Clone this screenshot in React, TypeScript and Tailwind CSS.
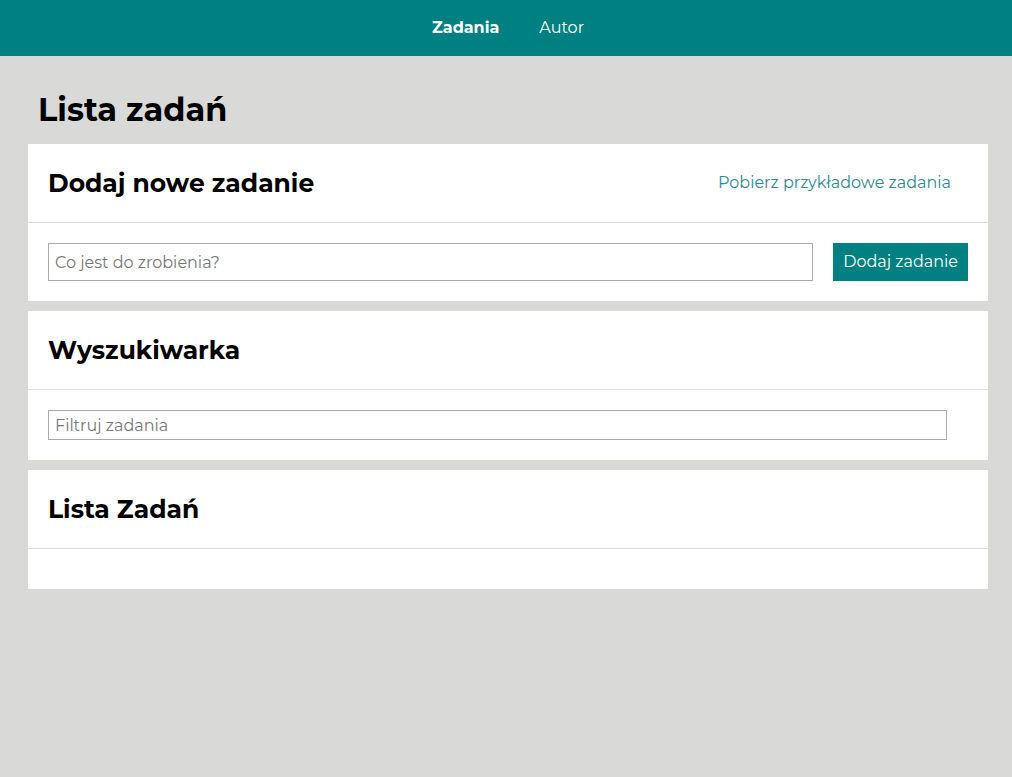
export default function App() {
  const font = { fontFamily: '"Montserrat", "Open Sans", "Noto Sans", sans-serif' };
  return (
    <div className="min-h-[777px] bg-[#d9d9d8] text-black" style={font}>
      <header className="h-14 bg-[#008080] flex items-center justify-center gap-10 pl-1 text-white text-base">
        <a className="font-bold">Zadania</a>
        <a>Autor</a>
      </header>
      <main className="pl-[28px] pr-[24px] pt-[35px]">
        <h1 className="ml-[10px] mb-[15px] text-[32px] leading-[38px] font-bold">Lista zadań</h1>
        <div className="flex flex-col gap-[10px]">
          <section className="bg-white">
            <div className="flex items-center justify-between pl-5 pr-[37px] py-5 border-b border-[#dddddd]">
              <h2 className="text-[25px] leading-[38px] font-bold">Dodaj nowe zadanie</h2>
              <a className="text-[#2b8a96] text-base">Pobierz przykładowe zadania</a>
            </div>
            <div className="flex items-center gap-5 p-5">
              <input
                className="flex-1 h-[38px] border border-[#aaaaaa] px-[6px] text-base outline-none placeholder:text-[#777]"
                placeholder="Co jest do zrobienia?"
                style={font}
              />
              <button className="h-[38px] px-[10px] bg-[#008080] text-white text-base" style={font}>
                Dodaj zadanie
              </button>
            </div>
          </section>
          <section className="bg-white">
            <div className="px-5 py-5 border-b border-[#dddddd]">
              <h2 className="text-[25px] leading-[38px] font-bold">Wyszukiwarka</h2>
            </div>
            <div className="pl-5 pr-[41px] py-5">
              <input
                className="w-full h-[30px] border border-[#aaaaaa] px-[6px] text-base outline-none placeholder:text-[#777]"
                placeholder="Filtruj zadania"
                style={font}
              />
            </div>
          </section>
          <section className="bg-white">
            <div className="px-5 py-5 border-b border-[#dddddd]">
              <h2 className="text-[25px] leading-[38px] font-bold">Lista Zadań</h2>
            </div>
            <div className="h-10" />
          </section>
        </div>
      </main>
    </div>
  );
}
